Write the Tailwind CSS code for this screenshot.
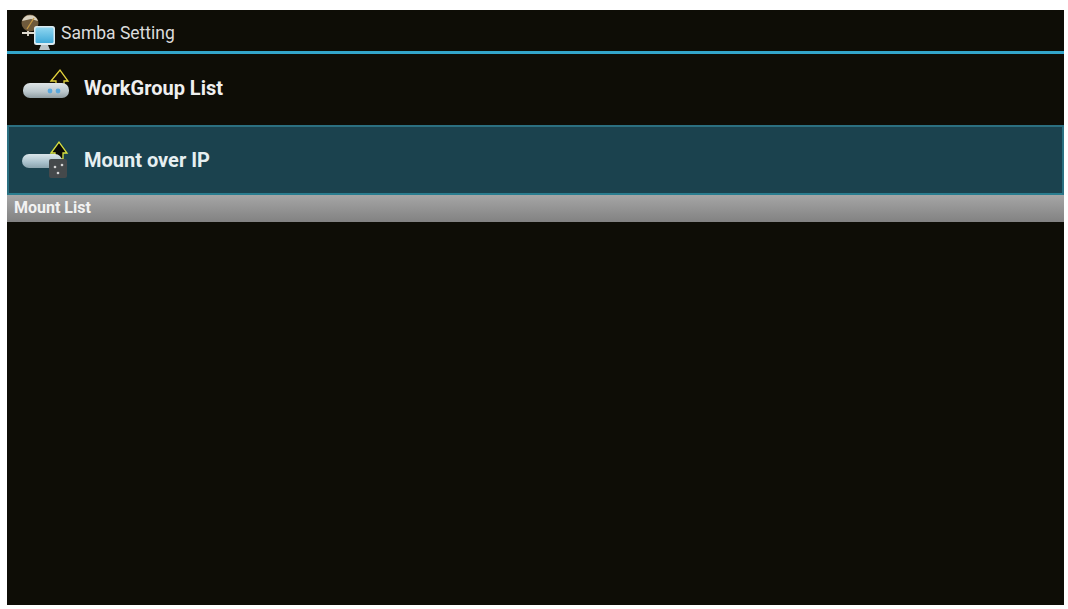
<!DOCTYPE html>
<html lang="en">
<head>
    <meta charset="UTF-8">
    <title>Samba Setting</title>
    <script src="https://cdn.jsdelivr.net/npm/@tailwindcss/browser@4"></script>
</head>
<body class="bg-white h-[609px] overflow-hidden font-['Roboto',sans-serif]">
    <div class="ml-[7px] mr-[4px] mt-[10px] h-[595px] bg-[#0e0d06] flex flex-col">
        <!-- title bar -->
        <div class="h-[41px] flex items-center pl-[13px]">
            <svg class="w-[37px] h-[40px]" viewBox="0 0 37 40">
                <defs>
                    <linearGradient id="screen" x1="0" y1="0" x2="0" y2="1">
                        <stop offset="0" stop-color="#8fd6f0"/>
                        <stop offset="1" stop-color="#3fa9d8"/>
                    </linearGradient>
                    <linearGradient id="pill" x1="0" y1="0" x2="0" y2="1">
                        <stop offset="0" stop-color="#dfe5e6"/>
                        <stop offset="0.6" stop-color="#b9c5ca"/>
                        <stop offset="1" stop-color="#8f9da3"/>
                    </linearGradient>
                    <linearGradient id="pill2" x1="0" y1="0" x2="0" y2="1">
                        <stop offset="0" stop-color="#dbe6ea"/>
                        <stop offset="0.6" stop-color="#a9c1cc"/>
                        <stop offset="1" stop-color="#8aa3ad"/>
                    </linearGradient>
                </defs>
                <circle cx="10" cy="12" r="8.5" fill="#6e5a3c"/>
                <path d="M2 10 A8.5 8.5 0 0 1 18 10 L11 8 Z" fill="#d9d2c0"/>
                <path d="M7 18 L14 7" stroke="#c79a45" stroke-width="1.3" fill="none"/>
                <path d="M2 22 H15 M8 20 V25" stroke="#e0dcd0" stroke-width="1.8" fill="none"/>
                <rect x="14" y="15" width="21" height="19" rx="2.5" fill="#dbeaf0"/>
                <rect x="15.5" y="16.5" width="18" height="15.5" rx="1.5" fill="url(#screen)"/>
                <path d="M21 34 H28 L30 39 H19 Z" fill="#b9c4c8"/>
            </svg>
            <span class="ml-[4px] mt-[6px] text-[17.5px] text-[#dcdcdc]">Samba Setting</span>
        </div>
        <div class="h-[3px] bg-[#33a5c9]"></div>

        <!-- list -->
        <div class="h-[71px] flex items-center pl-[14px]">
            <svg class="w-[50px] h-[40px] -mt-[3px]" viewBox="0 0 50 40">
                <path d="M30 13 L39 2 L47 13 H43 V17 H35 V13 Z" fill="#120c06" stroke="#e3d33c" stroke-width="1.3"/>
                <rect x="2" y="15" width="46" height="15" rx="7" fill="url(#pill)"/>
                <circle cx="29" cy="23" r="2.4" fill="#5aa9dd"/>
                <circle cx="37" cy="23" r="2.4" fill="#5aa9dd"/>
            </svg>
            <span class="ml-[13px] -mt-[4px] text-[20px] font-bold text-[#efefef]">WorkGroup List</span>
        </div>
        <div class="h-[70px] flex items-center pl-[12px] bg-[#1b424e] border-2 border-[#2b6f80] border-b-[#2a7d8f]">
            <svg class="w-[50px] h-[42px] -mt-[1px]" viewBox="0 0 50 42">
                <path d="M30 14 L38 3 L46 14 H42 V20 H34 V14 Z" fill="#0a0a06" stroke="#d8e040" stroke-width="1.3"/>
                <rect x="1" y="15" width="40" height="14" rx="7" fill="url(#pill2)"/>
                <rect x="28" y="20" width="18" height="19" rx="2" fill="#45494b"/>
                <circle cx="34" cy="28" r="1.3" fill="#d6d6d6"/>
                <circle cx="41" cy="26" r="1.3" fill="#d6d6d6"/>
                <circle cx="37" cy="34" r="1.3" fill="#d6d6d6"/>
            </svg>
            <span class="ml-[13px] -mt-[1px] text-[20px] font-bold text-[#e6eff1]">Mount over IP</span>
        </div>

        <!-- mount list header -->
        <div class="h-[27px] flex items-center pl-[7px] bg-gradient-to-b from-[#a6a6a6] to-[#828282]">
            <span class="text-[16px] font-bold text-[#f2f2f2] -mt-[1px]">Mount List</span>
        </div>
        <div class="flex-1"></div>
    </div>
</body>
</html>
